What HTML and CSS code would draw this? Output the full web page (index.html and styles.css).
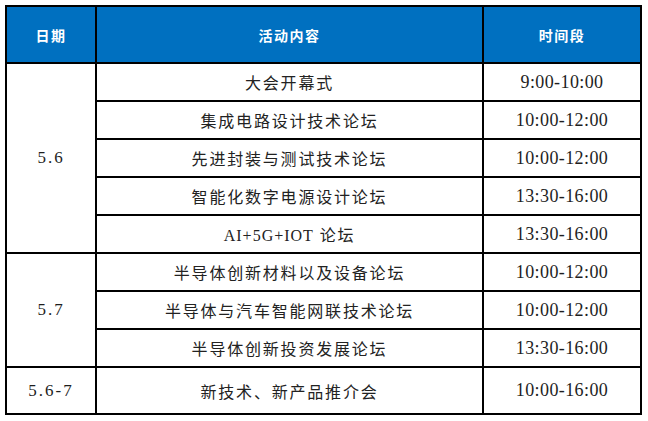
FILE: index.html
```html
<!DOCTYPE html>
<html lang="zh-CN">
<head>
<meta charset="utf-8">
<title>活动日程</title>
<link rel="stylesheet" href="styles.css">
</head>
<body>
<table class="schedule">
  <colgroup>
    <col class="c-date">
    <col class="c-act">
    <col class="c-time">
  </colgroup>
  <thead>
    <tr class="head">
      <th>日期</th>
      <th>活动内容</th>
      <th>时间段</th>
    </tr>
  </thead>
  <tbody>
    <tr>
      <td class="date" rowspan="5">5.6</td>
      <td class="act">大会开幕式</td>
      <td class="time">9:00-10:00</td>
    </tr>
    <tr>
      <td class="act">集成电路设计技术论坛</td>
      <td class="time">10:00-12:00</td>
    </tr>
    <tr>
      <td class="act">先进封装与测试技术论坛</td>
      <td class="time">10:00-12:00</td>
    </tr>
    <tr>
      <td class="act">智能化数字电源设计论坛</td>
      <td class="time">13:30-16:00</td>
    </tr>
    <tr>
      <td class="act"><span class="latin">AI+5G+IOT</span> 论坛</td>
      <td class="time">13:30-16:00</td>
    </tr>
    <tr>
      <td class="date" rowspan="3">5.7</td>
      <td class="act">半导体创新材料以及设备论坛</td>
      <td class="time">10:00-12:00</td>
    </tr>
    <tr>
      <td class="act">半导体与汽车智能网联技术论坛</td>
      <td class="time">10:00-12:00</td>
    </tr>
    <tr>
      <td class="act">半导体创新投资发展论坛</td>
      <td class="time">13:30-16:00</td>
    </tr>
    <tr class="last">
      <td class="date">5.6-7</td>
      <td class="act">新技术、新产品推介会</td>
      <td class="time">10:00-16:00</td>
    </tr>
  </tbody>
</table>
</body>
</html>
```
FILE: styles.css
```css
html, body {
  margin: 0;
  padding: 0;
  background: #ffffff;
}

body {
  padding: 5px 0 0 5px;
  font-family: "Liberation Serif", "Noto Sans CJK SC", serif;
  color: #222222;
}

.schedule {
  border-collapse: collapse;
  table-layout: fixed;
  width: 637px;
}

.c-date { width: 90px; }
.c-act { width: 387px; }
.c-time { width: 158px; }

.schedule th,
.schedule td {
  border: 2px solid #000000;
  padding: 0;
  text-align: center;
  vertical-align: middle;
}

.head th {
  height: 55px;
  background: #0070c0;
  color: #ffffff;
  font-family: "Noto Sans CJK SC", sans-serif;
  font-size: 14px;
  font-weight: 700;
  letter-spacing: 1.5px;
}

.schedule tbody td {
  height: 36px;
}

.schedule tbody tr.last td {
  height: 45px;
}

.act {
  font-family: "Liberation Serif", "Noto Sans CJK SC", serif;
  font-size: 16px;
  letter-spacing: 1.8px;
  padding-left: 4px;
}

.latin {
  font-family: "Liberation Serif", serif;
  font-size: 16px;
  letter-spacing: 1px;
}

.date {
  font-family: "Liberation Serif", serif;
  font-size: 17px;
  letter-spacing: 2px;
  padding-left: 2px;
  color: #1e1e1e;
}

.time {
  font-size: 18px;
  letter-spacing: 0.4px;
  color: #1e1e1e;
}
```
